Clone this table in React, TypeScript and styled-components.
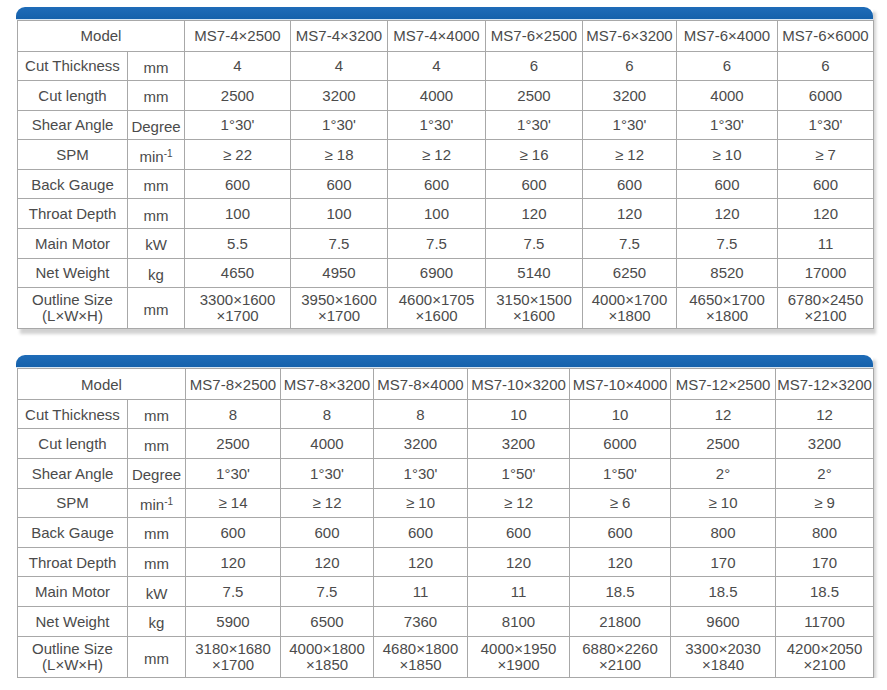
import { ReactElement } from 'react'
import styled, { createGlobalStyle } from 'styled-components'

type Spec = {
  label: string
  sublabel?: string
  unit: string
  sup?: string
  values: string[]
}

type SheetData = {
  widths: number[]
  models: string[]
  rows: Spec[]
}

const sheets: SheetData[] = [
  {
    widths: [110, 57, 106, 97, 98, 97, 94, 101, 96],
    models: ['MS7-4×2500', 'MS7-4×3200', 'MS7-4×4000', 'MS7-6×2500', 'MS7-6×3200', 'MS7-6×4000', 'MS7-6×6000'],
    rows: [
      { label: 'Cut Thickness', unit: 'mm', values: ['4', '4', '4', '6', '6', '6', '6'] },
      { label: 'Cut length', unit: 'mm', values: ['2500', '3200', '4000', '2500', '3200', '4000', '6000'] },
      { label: 'Shear Angle', unit: 'Degree', values: ["1°30'", "1°30'", "1°30'", "1°30'", "1°30'", "1°30'", "1°30'"] },
      { label: 'SPM', unit: 'min', sup: '-1', values: ['≥ 22', '≥ 18', '≥ 12', '≥ 16', '≥ 12', '≥ 10', '≥ 7'] },
      { label: 'Back Gauge', unit: 'mm', values: ['600', '600', '600', '600', '600', '600', '600'] },
      { label: 'Throat Depth', unit: 'mm', values: ['100', '100', '100', '120', '120', '120', '120'] },
      { label: 'Main Motor', unit: 'kW', values: ['5.5', '7.5', '7.5', '7.5', '7.5', '7.5', '11'] },
      { label: 'Net Weight', unit: 'kg', values: ['4650', '4950', '6900', '5140', '6250', '8520', '17000'] },
      {
        label: 'Outline Size',
        sublabel: '(L×W×H)',
        unit: 'mm',
        values: [
          '3300×1600|×1700',
          '3950×1600|×1700',
          '4600×1705|×1600',
          '3150×1500|×1600',
          '4000×1700|×1800',
          '4650×1700|×1800',
          '6780×2450|×2100',
        ],
      },
    ],
  },
  {
    widths: [110, 58, 95, 93, 94, 102, 101, 105, 98],
    models: ['MS7-8×2500', 'MS7-8×3200', 'MS7-8×4000', 'MS7-10×3200', 'MS7-10×4000', 'MS7-12×2500', 'MS7-12×3200'],
    rows: [
      { label: 'Cut Thickness', unit: 'mm', values: ['8', '8', '8', '10', '10', '12', '12'] },
      { label: 'Cut length', unit: 'mm', values: ['2500', '4000', '3200', '3200', '6000', '2500', '3200'] },
      { label: 'Shear Angle', unit: 'Degree', values: ["1°30'", "1°30'", "1°30'", "1°50'", "1°50'", '2°', '2°'] },
      { label: 'SPM', unit: 'min', sup: '-1', values: ['≥ 14', '≥ 12', '≥ 10', '≥ 12', '≥ 6', '≥ 10', '≥ 9'] },
      { label: 'Back Gauge', unit: 'mm', values: ['600', '600', '600', '600', '600', '800', '800'] },
      { label: 'Throat Depth', unit: 'mm', values: ['120', '120', '120', '120', '120', '170', '170'] },
      { label: 'Main Motor', unit: 'kW', values: ['7.5', '7.5', '11', '11', '18.5', '18.5', '18.5'] },
      { label: 'Net Weight', unit: 'kg', values: ['5900', '6500', '7360', '8100', '21800', '9600', '11700'] },
      {
        label: 'Outline Size',
        sublabel: '(L×W×H)',
        unit: 'mm',
        values: [
          '3180×1680|×1700',
          '4000×1800|×1850',
          '4680×1800|×1850',
          '4000×1950|×1900',
          '6880×2260|×2100',
          '3300×2030|×1840',
          '4200×2050|×2100',
        ],
      },
    ],
  },
]

function Stacked({ text }: { text: string }): ReactElement {
  const parts = text.split('|')
  return (
    <>
      {parts.map((p, i) => (
        <Line key={i}>{p}</Line>
      ))}
    </>
  )
}

function SpecSheet({ data }: { data: SheetData }): ReactElement {
  return (
    <Card>
      <Cap />
      <Table>
        <colgroup>
          {data.widths.map((w, i) => (
            <col key={i} style={{ width: w }} />
          ))}
        </colgroup>
        <tbody>
          <HeadRow>
            <Cell colSpan={2}>Model</Cell>
            {data.models.map((m) => (
              <Cell key={m}>{m}</Cell>
            ))}
          </HeadRow>
          {data.rows.map((r) => (
            <Row key={r.label} $tall={!!r.sublabel}>
              <Cell>
                {r.sublabel ? (
                  <>
                    <Line>{r.label}</Line>
                    <Line>{r.sublabel}</Line>
                  </>
                ) : (
                  r.label
                )}
              </Cell>
              <UnitCell>
                {r.unit}
                {r.sup && <sup>{r.sup}</sup>}
              </UnitCell>
              {r.values.map((v, i) => (
                <Cell key={i}>{v.includes('|') ? <Stacked text={v} /> : v}</Cell>
              ))}
            </Row>
          ))}
        </tbody>
      </Table>
    </Card>
  )
}

export default function App(): ReactElement {
  return (
    <>
      <GlobalStyle />
      <Page>
        {sheets.map((s, i) => (
          <SpecSheet key={i} data={s} />
        ))}
      </Page>
    </>
  )
}

const GlobalStyle = createGlobalStyle`
  html, body {
    margin: 0;
    padding: 0;
    background: #ffffff;
  }
  body {
    font-family: "Liberation Sans", Arial, sans-serif;
  }
`

const Page = styled.div`
  display: flex;
  flex-direction: column;
  gap: 26px;
  padding: 7px 0 0 17px;
  width: 856px;
`

const Card = styled.div`
  display: flex;
  flex-direction: column;
  box-shadow: 3px 5px 3px rgba(0, 0, 0, 0.18);
`

const Cap = styled.div`
  height: 12px;
  margin-left: -1px;
  background: linear-gradient(#1f6cb8, #1561ab);
  border-radius: 9px 9px 0 0;
  border-bottom: 1px solid #d6e6f4;
`

const Table = styled.table`
  width: 856px;
  table-layout: fixed;
  border-collapse: collapse;
  background: #ffffff;
  color: #4b4b4b;
  font-size: 15px;
  border: 1px solid #9a9a9a;
  border-top: none;
`

const HeadRow = styled.tr`
  height: 30.5px;
`

const Row = styled.tr<{ $tall?: boolean }>`
  height: ${(p) => (p.$tall ? '41px' : '29.6px')};
`

const Cell = styled.td`
  border: 1px solid #a8a8a8;
  padding: 0;
  text-align: center;
  vertical-align: middle;
  white-space: nowrap;
  line-height: 17px;
`

const UnitCell = styled(Cell)`
  padding-top: 3px;

  sup {
    font-size: 10px;
    vertical-align: 5px;
    line-height: 0;
  }
`

const Line = styled.div`
  line-height: 16px;
`
